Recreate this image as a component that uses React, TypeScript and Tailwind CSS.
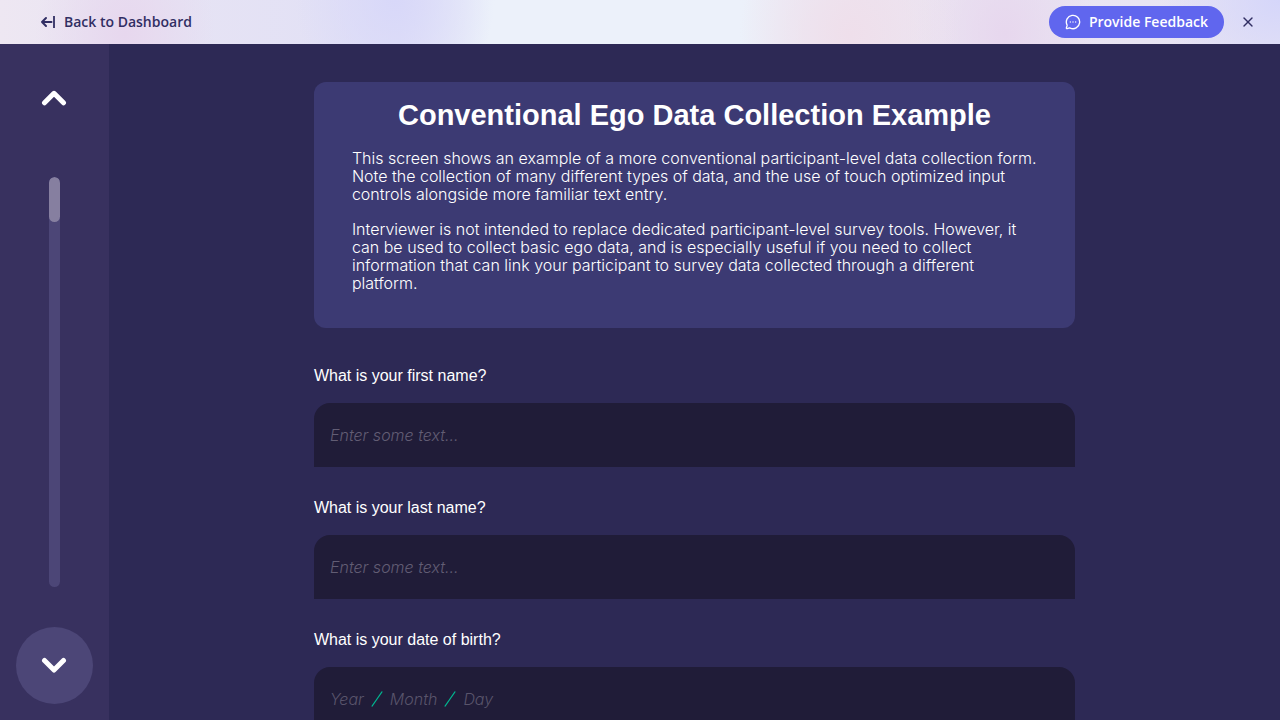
import { MessageCircleMore, X } from "lucide-react";

function BackIcon() {
  return (
    <svg
      width="16"
      height="16"
      viewBox="0 0 16 16"
      fill="none"
      stroke="currentColor"
      strokeWidth="2"
      strokeLinecap="round"
      strokeLinejoin="round"
      aria-hidden="true"
    >
      <path d="M6 4 2 8l4 4M2 8h9.500" />
      <path d="M14 3v10" strokeLinecap="square" strokeWidth="1.800" />
    </svg>
  );
}

function Chevron({ down = false }: { down?: boolean }) {
  return (
    <svg
      width="27"
      height="19"
      viewBox="0 0 27 19"
      fill="none"
      stroke="currentColor"
      strokeWidth="5"
      strokeLinecap="round"
      strokeLinejoin="round"
      aria-hidden="true"
    >
      <path d={down ? "M3.500 4.500 13 14l9.500-9.500" : "M3.500 13.800 13 4.300l9.500 9.500"} />
    </svg>
  );
}

function TopBar() {
  return (
    <header className="flex h-11 shrink-0 items-center justify-between bg-[#ecf1fa] bg-[radial-gradient(ellipse_90px_120px_at_125px_34px,#e7d7ee,transparent),radial-gradient(ellipse_100px_110px_at_395px_0px,#d8d8f9,transparent),radial-gradient(ellipse_110px_120px_at_850px_34px,#efdfeb,#efdfeb00),radial-gradient(ellipse_90px_120px_at_1005px_34px,#e7d7ee,transparent),radial-gradient(ellipse_120px_90px_at_1280px_0px,#d5d6fa,transparent),linear-gradient(to_right,#eee7f2_0px,#e6e3f4_180px,#e1e0f6_400px,#ecf1fa_490px,#ecf1fa_740px,#ece5f1_860px,#e6e3f4_1280px)] pr-6 pl-10 font-['Open_Sans',sans-serif] text-sm font-semibold">
      <a href="#dashboard" className="flex items-center gap-2 text-[#312e63]">
        <BackIcon />
        Back to Dashboard
      </a>
      <div className="flex items-center gap-4">
        <button
          type="button"
          className="flex h-8 items-center gap-2 rounded-full bg-[#6066ee] px-4 text-white"
        >
          <MessageCircleMore size={16} strokeWidth={2} aria-hidden="true" />
          Provide Feedback
        </button>
        <button type="button" aria-label="Close" className="text-[#312e63]">
          <X size={16} strokeWidth={2} aria-hidden="true" />
        </button>
      </div>
    </header>
  );
}

function Sidebar() {
  return (
    <nav
      aria-label="Interview navigation"
      className="flex shrink-0 flex-col items-center gap-10 bg-[#38315f] p-4 text-white"
    >
      <button
        type="button"
        aria-label="Previous"
        className="flex size-[77px] items-center justify-center rounded-full"
      >
        <Chevron />
      </button>
      <div
        role="progressbar"
        aria-label="Interview progress"
        aria-valuenow={11}
        className="w-[11px] flex-1 overflow-hidden rounded-full bg-[#4c4677]"
      >
        <div className="h-[11%] rounded-full bg-[#867fa0]" />
      </div>
      <button
        type="button"
        aria-label="Next"
        className="flex size-[77px] items-center justify-center rounded-full bg-[#4c4677]"
      >
        <Chevron down />
      </button>
    </nav>
  );
}

function TextField({ id, label }: { id: string; label: string }) {
  return (
    <div>
      <label htmlFor={id} className="block text-base leading-6">
        {label}
      </label>
      <input
        id={id}
        type="text"
        placeholder="Enter some text..."
        className="mt-[15px] block h-16 w-full rounded-t-2xl bg-[#201c38] px-4 font-['Inter',sans-serif] text-base font-light placeholder:text-[#625d74] placeholder:italic focus:outline-none"
      />
    </div>
  );
}

function DateField() {
  return (
    <div role="group" aria-labelledby="birth-label">
      <p id="birth-label" className="text-base leading-6">
        What is your date of birth?
      </p>
      <div className="mt-[15px] flex h-16 items-center gap-[7px] rounded-t-2xl bg-[#201c38] px-4 font-['Inter',sans-serif] text-base font-light text-[#59546b] italic">
        <button type="button">Year</button>
        <DateSlash />
        <button type="button">Month</button>
        <DateSlash />
        <button type="button">Day</button>
      </div>
    </div>
  );
}

function DateSlash() {
  return (
    <svg width="12" height="16" viewBox="0 0 12 16" stroke="#00b891" strokeWidth="1.300" aria-hidden="true">
      <path d="M.8 15.500 11.200.5" />
    </svg>
  );
}

export default function App() {
  return (
    <div className="flex h-screen flex-col overflow-hidden bg-[#2d2955] font-['Liberation_Sans',Arial,sans-serif] text-white">
      <TopBar />
      <div className="flex min-h-0 flex-1">
        <Sidebar />
        <main className="min-w-0 flex-1 overflow-hidden pt-[38px]">
          <div className="mx-auto w-[65%]">
            <section className="rounded-xl bg-[#3c3a73] px-[38px] pt-[15px] pb-9">
              <h1 className="text-center text-[29px] leading-9 font-bold">
                Conventional Ego Data Collection Example
              </h1>
              <div className="mt-4 flex flex-col gap-[17px] font-['Inter',sans-serif] text-base leading-[18px] font-light">
                <p>
                  This screen shows an example of a more conventional participant-level data collection form.
                  <br />
                  Note the collection of many different types of data, and the use of touch optimized input
                  <br />
                  controls alongside more familiar text entry.
                </p>
                <p>
                  Interviewer is not intended to replace dedicated participant-level survey tools. However, it
                  <br />
                  can be used to collect basic ego data, and is especially useful if you need to collect
                  <br />
                  information that can link your participant to survey data collected through a different
                  <br />
                  platform.
                </p>
              </div>
            </section>
            <form className="mt-9 flex flex-col gap-[29px]">
              <TextField id="first-name" label="What is your first name?" />
              <TextField id="last-name" label="What is your last name?" />
              <DateField />
            </form>
          </div>
        </main>
      </div>
    </div>
  );
}
